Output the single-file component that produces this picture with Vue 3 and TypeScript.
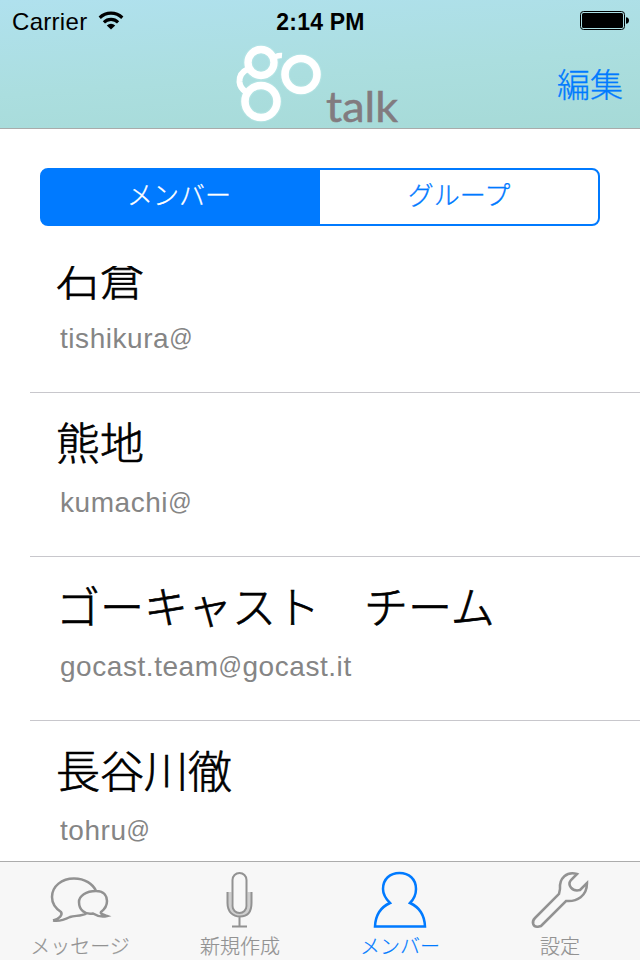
<script setup lang="ts">
import { ref } from 'vue'

interface Member {
  name: string
  user: string
  domain: string
}

const members: Member[] = [
  { name: '石倉', user: 'tishikura', domain: '' },
  { name: '熊地', user: 'kumachi', domain: '' },
  { name: 'ゴーキャスト\u3000チーム', user: 'gocast.team', domain: 'gocast.it' },
  { name: '長谷川徹', user: 'tohru', domain: '' },
]
const segments = ['メンバー', 'グループ']
const selected = ref(0)
</script>

<template>
  <div class="screen">
    <header class="top">
      <div class="status">
        <div class="carrier">
          <span>Carrier</span>
          <svg width="26" height="20" viewBox="0 0 26 20">
            <path d="M.6 6.600A17.500 17.500 0 0 1 25.400 6.600L23.200 9A14.300 14.300 0 0 0 2.800 9Z" />
            <path d="M4.800 11.200A11.600 11.600 0 0 1 21.200 11.200L19 13.500A8.300 8.300 0 0 0 7 13.500Z" />
            <path d="M8.800 15.400A6 6 0 0 1 17.200 15.400L13 19.600Z" />
          </svg>
        </div>
        <div class="clock">2:14 PM</div>
        <svg class="battery" width="50" height="20" viewBox="0 0 50 20">
          <rect x="1.500" y=".5" width="44" height="18" rx="3" fill="none" stroke="#000" />
          <rect x="3" y="2" width="41" height="15" rx="1.500" />
          <path d="M47 6.200Q50 6.500 50 9.500T47 12.800Z" />
        </svg>
      </div>
      <div class="nav">
        <svg class="logo" width="180" height="90" viewBox="230 38 180 90">
          <g fill="none" stroke="#bdebea" stroke-width="10" opacity=".4">
            <circle cx="261" cy="62.500" r="13" /><circle cx="301" cy="74.500" r="16" /><circle cx="261" cy="101.500" r="16" />
          </g>
          <g fill="none" stroke="#fff">
            <circle cx="261" cy="62.500" r="13" stroke-width="7.400" />
            <circle cx="301" cy="74.500" r="16" stroke-width="7.600" />
            <circle cx="261" cy="101.500" r="16" stroke-width="7.600" />
            <path d="M248 69Q239 73 239.500 82Q240 88 246 92" stroke-width="6" />
            <path d="M273 59Q276 55 282 55.500" stroke-width="5.500" />
          </g>
          <text x="326" y="121.500" textLength="72" lengthAdjust="spacingAndGlyphs">talk</text>
        </svg>
        <button class="edit">編集</button>
      </div>
    </header>

    <div class="segmented">
      <button v-for="(s, i) in segments" :key="s" :class="{ on: selected === i }" @click="selected = i">{{ s }}</button>
    </div>

    <main class="list">
      <article v-for="m in members" :key="m.user" class="row">
        <h2>{{ m.name }}</h2>
        <p>{{ m.user }}<span class="at">@</span>{{ m.domain }}</p>
      </article>
    </main>

    <nav class="tabs">
      <a class="tab">
        <svg width="60" height="60" viewBox="0 0 60 60">
          <path d="M3 50.500C9 49 13 45 11 42C5 38 2 33 2 27C2 16 12 8.500 24 8.500C35 8.500 43 14 46 21C55 21 57 27 57 31C57 36 55 39 51 42C50 44 54 45 57 46C51 47.500 47 46 43 43.500C35 45 29 40 29 32C29 26 36 21 46 21M37 43C31 47 25 45 20 47C14 50 9 51.500 3 50.500" />
        </svg>
        <span>メッセージ</span>
      </a>
      <a class="tab">
        <svg width="60" height="60" viewBox="0 0 60 60">
          <path d="M19.500 22V34C19.500 41 23 45 30 45S39.500 41 39.500 34V22" stroke="#cfcfcf" stroke-width="4" />
          <path d="M17.500 22V33C17.500 42 23 46.500 30 46.500S41.500 42 41.500 33V22M29.500 47V56M22 56.500H37" stroke-width="2" />
          <rect x="22.500" y="3" width="14" height="40" rx="7" fill="#f7f7f7" stroke-width="2" />
        </svg>
        <span>新規作成</span>
      </a>
      <a class="tab active">
        <svg width="60" height="60" viewBox="0 0 60 60">
          <path d="M20 33C16 29 13 24 13 19C13 9 20 3 29.500 3S46 9 46 19C46 24 44 29 40 33C49 37 54.500 45 55 56.500H5C5.500 45 11 37 20 33Z" />
        </svg>
        <span>メンバー</span>
      </a>
      <a class="tab">
        <svg width="60" height="60" viewBox="0 0 60 60">
          <path d="M47 4C37 1 29 8 30 19L29 24L5 48C1 52 3 58 9 56.500L11 56L36 31C47 32 57 26 57 13L50 20C42 22 37 15 41 10Z" />
        </svg>
        <span>設定</span>
      </a>
    </nav>
  </div>
</template>

<style>
body { margin: 0; }
</style>

<style scoped>
.screen {
  width: 640px; height: 960px; overflow: hidden;
  display: flex; flex-direction: column;
  background: #fff; color: #000;
  font-family: "Liberation Sans", "Noto Sans CJK JP", sans-serif;
}
button { margin: 0; padding: 0; border: 0; background: none; font-family: "Noto Sans CJK JP", sans-serif; font-weight: 300; color: #007aff; -webkit-text-stroke: .3px currentColor; }
.top {
  height: 129px; flex: none; box-sizing: border-box; border-bottom: 1px solid #a9abab;
  background: linear-gradient(176deg, #b0e1ee, #abdedf 55%, #a6dad7);
}
.status { height: 40px; display: grid; grid-template-columns: 1fr 1fr 1fr; padding: 0 11px 0 12px; align-items: center; font-size: 24px; line-height: 40px; }
.carrier { display: flex; align-items: center; gap: 11px; letter-spacing: .3px; padding-top: 2px; }
.carrier svg { margin-top: -5px; }
.clock { text-align: center; font-weight: 700; font-size: 23px; letter-spacing: .2px; padding-top: 2px; }
.battery { justify-self: end; }
.nav { height: 88px; display: grid; grid-template-columns: 1fr 180px 1fr; }
.logo { grid-column: 2; margin-top: -2px; overflow: visible; }
.logo text { font-family: Lato, sans-serif; font-size: 42px; font-weight: 400; fill: #827b7f; stroke: #827b7f; stroke-width: .5px; }
.edit { justify-self: end; align-self: start; margin: 0 17px 0 0; font-size: 33px; line-height: 86px; }
.segmented { flex: none; display: grid; grid-template-columns: 278px 278px; margin: 39px 40px 0; height: 58px; box-sizing: border-box; border: 2px solid #007aff; border-radius: 8px; overflow: hidden; background: linear-gradient(90deg, #007aff 50%, #fff 50%); }
.segmented button { font-size: 26px; line-height: 48px; padding: 0 4px 6px 0; }
.segmented button + button { padding-right: 0; }
.segmented .on { background: #007aff; color: #fff; }
.list { flex: 1; min-height: 0; overflow: hidden; margin-top: 40px; display: flex; flex-direction: column; }
.row { flex: none; height: 164px; box-sizing: border-box; margin-left: 30px; padding: 20px 0 0 26px; border-bottom: 1px solid #c8c7cc; }
.row:first-child { height: 127px; padding-top: 0; }
.row:first-child h2 { margin-top: -17px; }
h2 { margin: 0; font-family: "Noto Sans CJK JP", sans-serif; font-size: 44px; line-height: 56px; font-weight: 300; white-space: pre; -webkit-text-stroke: .7px currentColor; }
p { margin: 17px 0 0 4px; font-size: 28px; line-height: 34px; letter-spacing: .55px; color: #858585; white-space: nowrap; }
.at { font-size: 23px; position: relative; top: -2px; }
.tabs { flex: none; height: 99px; box-sizing: border-box; border-top: 1px solid #acacac; background: #f7f7f7; display: grid; grid-template-columns: repeat(4, 1fr); }
.tab { display: flex; flex-direction: column; align-items: center; padding-top: 8px; color: #929292; font-family: "Noto Sans CJK JP", sans-serif; font-weight: 300; font-size: 20px; line-height: 31px; }
.tab span { -webkit-text-stroke: .2px currentColor; }
.tab svg { flex: none; fill: none; stroke: currentColor; stroke-width: 2.5; overflow: visible; }
.active { color: #007aff; }
</style>
